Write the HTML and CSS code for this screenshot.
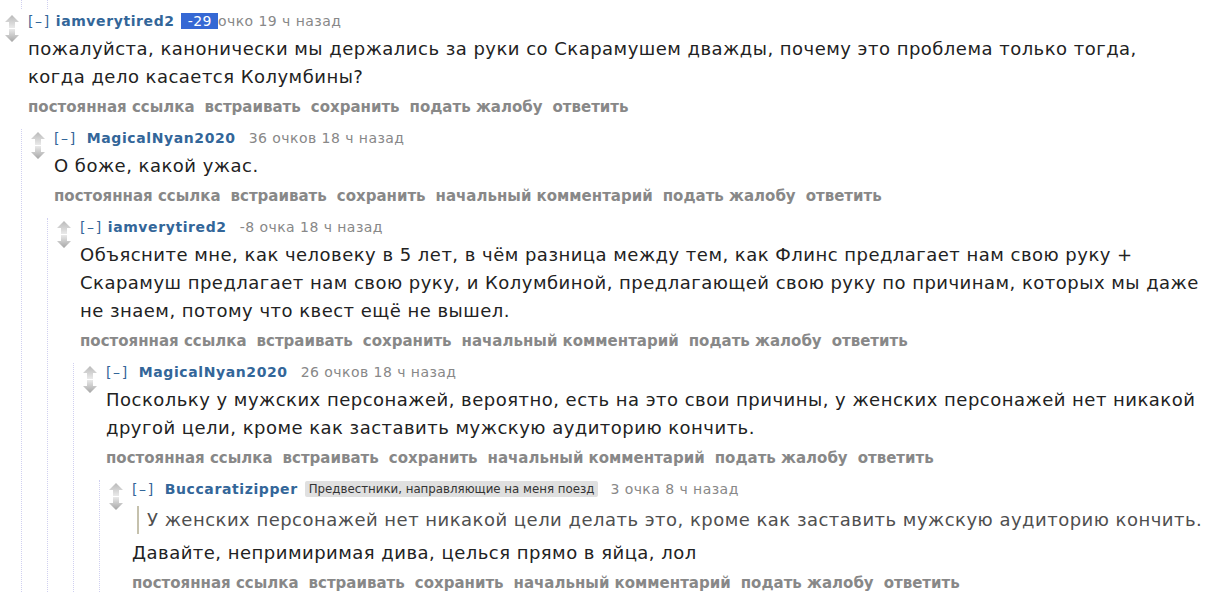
FILE: index.html
```html
<!DOCTYPE html>
<html lang="ru">
<head>
<meta charset="utf-8">
<title>Комментарии</title>
<link rel="stylesheet" href="styles.css">
</head>
<body>
<div class="stub"><div class="stub-inner"></div></div>
<div class="thread">
  <div class="comment root">
    <div class="midcol"><svg class="arrows" viewBox="0 0 14 27" width="14" height="27"><defs><linearGradient id="g" x1="0" y1="0" x2="0" y2="27" gradientUnits="userSpaceOnUse"><stop offset="0" stop-color="#b9b9b9"/><stop offset="0.5" stop-color="#ececec"/><stop offset="1" stop-color="#a6a6a6"/></linearGradient></defs><polygon points="7,0 14,7 10,7 10,13 4,13 4,7 0,7" fill="url(#g)"/><polygon points="4,14 10,14 10,20 14,20 7,27 0,20 4,20" fill="url(#g)"/></svg></div>
    <div class="entry">
      <p class="tagline"><a class="expand">[–]</a><a class="author">iamverytired2</a><span class="sel">-29</span><span class="meta">очко 19 ч назад</span></p>
      <div class="md"><p>пожалуйста, канонически мы держались за руки со Скарамушем дважды, почему это проблема только тогда,<br>когда дело касается Колумбины?</p></div>
      <ul class="buttons"><li>постоянная ссылка</li><li>встраивать</li><li>сохранить</li><li>подать жалобу</li><li>ответить</li></ul>
    </div>
    <div class="child">
      <div class="comment">
        <div class="midcol"><svg class="arrows" viewBox="0 0 14 27" width="14" height="27"><polygon points="7,0 14,7 10,7 10,13 4,13 4,7 0,7" fill="url(#g)"/><polygon points="4,14 10,14 10,20 14,20 7,27 0,20 4,20" fill="url(#g)"/></svg></div>
        <div class="entry">
          <p class="tagline"><a class="expand wide">[–]</a><a class="author">MagicalNyan2020</a><span class="meta">36 очков 18 ч назад</span></p>
          <div class="md"><p>О боже, какой ужас.</p></div>
          <ul class="buttons"><li>постоянная ссылка</li><li>встраивать</li><li>сохранить</li><li>начальный комментарий</li><li>подать жалобу</li><li>ответить</li></ul>
        </div>
        <div class="child">
          <div class="comment">
            <div class="midcol"><svg class="arrows" viewBox="0 0 14 27" width="14" height="27"><polygon points="7,0 14,7 10,7 10,13 4,13 4,7 0,7" fill="url(#g)"/><polygon points="4,14 10,14 10,20 14,20 7,27 0,20 4,20" fill="url(#g)"/></svg></div>
            <div class="entry">
              <p class="tagline"><a class="expand">[–]</a><a class="author">iamverytired2</a><span class="meta">-8 очка 18 ч назад</span></p>
              <div class="md"><p>Объясните мне, как человеку в 5 лет, в чём разница между тем, как Флинс предлагает нам свою руку +<br>Скарамуш предлагает нам свою руку, и Колумбиной, предлагающей свою руку по причинам, которых мы даже<br>не знаем, потому что квест ещё не вышел.</p></div>
              <ul class="buttons"><li>постоянная ссылка</li><li>встраивать</li><li>сохранить</li><li>начальный комментарий</li><li>подать жалобу</li><li>ответить</li></ul>
            </div>
            <div class="child">
              <div class="comment">
                <div class="midcol"><svg class="arrows" viewBox="0 0 14 27" width="14" height="27"><polygon points="7,0 14,7 10,7 10,13 4,13 4,7 0,7" fill="url(#g)"/><polygon points="4,14 10,14 10,20 14,20 7,27 0,20 4,20" fill="url(#g)"/></svg></div>
                <div class="entry">
                  <p class="tagline"><a class="expand wide">[–]</a><a class="author">MagicalNyan2020</a><span class="meta">26 очков 18 ч назад</span></p>
                  <div class="md"><p>Поскольку у мужских персонажей, вероятно, есть на это свои причины, у женских персонажей нет никакой<br>другой цели, кроме как заставить мужскую аудиторию кончить.</p></div>
                  <ul class="buttons"><li>постоянная ссылка</li><li>встраивать</li><li>сохранить</li><li>начальный комментарий</li><li>подать жалобу</li><li>ответить</li></ul>
                </div>
                <div class="child">
                  <div class="comment">
                    <div class="midcol"><svg class="arrows" viewBox="0 0 14 27" width="14" height="27"><polygon points="7,0 14,7 10,7 10,13 4,13 4,7 0,7" fill="url(#g)"/><polygon points="4,14 10,14 10,20 14,20 7,27 0,20 4,20" fill="url(#g)"/></svg></div>
                    <div class="entry">
                      <p class="tagline"><a class="expand wide">[–]</a><a class="author with-flair">Buccaratizipper</a><span class="flair">Предвестники, направляющие на меня поезд</span><span class="meta">3 очка 8 ч назад</span></p>
                      <div class="md"><blockquote><p>У женских персонажей нет никакой цели делать это, кроме как заставить мужскую аудиторию кончить.</p></blockquote><p>Давайте, непримиримая дива, целься прямо в яйца, лол</p></div>
                      <ul class="buttons"><li>постоянная ссылка</li><li>встраивать</li><li>сохранить</li><li>начальный комментарий</li><li>подать жалобу</li><li>ответить</li></ul>
                    </div>
                  </div>
                </div>
              </div>
            </div>
          </div>
        </div>
      </div>
    </div>
  </div>
</div>
</body>
</html>
```

FILE: styles.css
```css
html, body {
  margin: 0;
  padding: 0;
  background: #fff;
}

body {
  font-family: "DejaVu Sans", Verdana, sans-serif;
  color: #222;
  overflow: hidden;
}

.stub {
  margin-left: 21px;
  height: 9px;
  border-left: 1px dotted #d0d0f0;
}

.stub-inner {
  margin-left: 25px;
  height: 9px;
  border-left: 1px dotted #d0d0f0;
}

.thread {
  margin-left: -5px;
  margin-top: 3px;
}

.comment {
  display: grid;
  grid-template-columns: 23px 1fr;
  border-left: 1px dotted #d0d0f0;
  padding-left: 9px;
}

.comment.root {
  border-left-color: transparent;
}

.midcol {
  padding-top: 3px;
}

.arrows {
  display: block;
}

.entry {
  min-width: 0;
}

.tagline {
  margin: 0;
  font-size: 14px;
  line-height: 18px;
  letter-spacing: 0.45px;
  color: #888;
  white-space: nowrap;
}

.expand {
  color: #369;
  letter-spacing: 1.6px;
  margin-right: 5px;
}

.expand.wide {
  margin-right: 10px;
}

.author {
  color: #369;
  font-weight: bold;
  letter-spacing: 0.6px;
  margin-right: 13px;
}

.author.with-flair {
  margin-right: 7px;
}

.sel {
  background: #3568d4;
  color: #fff;
  padding: 0 6px 0 7px;
  margin-left: -7px;
}

.flair {
  display: inline-block;
  font-size: 11.8px;
  line-height: 16px;
  letter-spacing: 0;
  padding: 0 4px;
  background: #e0e0e0;
  color: #333;
  border-radius: 2px;
  margin-right: 12px;
  vertical-align: 1px;
}

.md {
  margin-top: 4.5px;
  font-size: 18px;
  line-height: 28px;
  letter-spacing: 0.48px;
  color: #222;
  white-space: nowrap;
}

.md p {
  margin: 0;
}

.md blockquote {
  margin: 7.5px 0 5px 5px;
  padding: 0 0 0 8px;
  border-left: 2px solid #c5c1ad;
  color: #4f4f4f;
}

.buttons {
  list-style: none;
  margin: 7.5px 0 0;
  padding: 0;
  display: flex;
  gap: 10px;
  font-size: 15px;
  line-height: 18px;
  font-weight: bold;
  color: #888;
  white-space: nowrap;
}

.child {
  grid-column: 1 / -1;
  margin-left: 16px;
  margin-top: 13px;
}
```
